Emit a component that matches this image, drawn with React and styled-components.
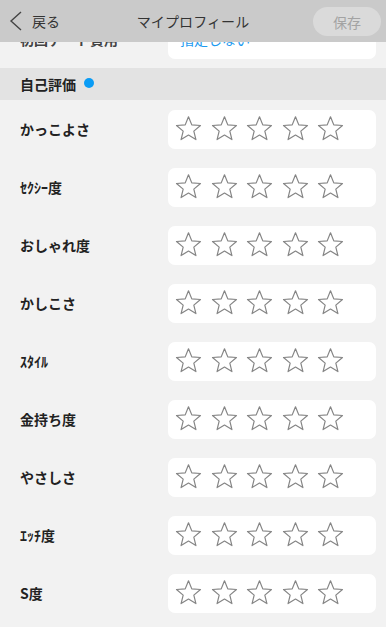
import React from 'react';
import styled, { createGlobalStyle } from 'styled-components';

const GlobalStyle = createGlobalStyle`
  html, body {
    margin: 0;
    padding: 0;
    background: #f2f2f2;
  }
  body {
    font-family: "Noto Sans CJK JP", "Noto Sans", sans-serif;
    color: #222;
  }
`;

const Page = styled.div`
  width: 386px;
  height: 627px;
  overflow: hidden;
  background: #f2f2f2;
  display: flex;
  flex-direction: column;
`;

const Header = styled.div`
  height: 42px;
  flex: 0 0 42px;
  background: #cacaca;
  display: grid;
  grid-template-columns: 1fr auto 1fr;
  align-items: center;
`;

const Back = styled.div`
  display: flex;
  align-items: center;
  gap: 9px;
  padding-left: 9px;
  font-size: 14px;
  color: #333;
`;

const Title = styled.div`
  font-size: 14px;
  color: #333;
  letter-spacing: 0.1px;
`;

const SaveWrap = styled.div`
  display: flex;
  justify-content: flex-end;
  padding-right: 5px;
`;

const SaveButton = styled.button`
  width: 68px;
  height: 29px;
  border: none;
  border-radius: 15px;
  background: #dadada;
  color: #a3a3a3;
  font-family: inherit;
  font-size: 14px;
  padding: 0;
  margin-top: 1px;
`;

const Clip = styled.div`
  height: 26px;
  flex: 0 0 26px;
  overflow: hidden;
  display: flex;
  flex-direction: column;
  justify-content: flex-end;
`;

const Row = styled.div`
  height: 58px;
  flex: 0 0 58px;
  display: flex;
  align-items: center;
  padding: 0 10px 0 20px;
`;

const Label = styled.div`
  width: 148px;
  flex: 0 0 148px;
  font-size: 14px;
  font-weight: 700;
  color: ${(p) => (p.muted ? '#444' : '#222')};
  white-space: nowrap;
`;

const Field = styled.div`
  flex: 1;
  height: 39px;
  background: #fff;
  border-radius: 7px;
  display: flex;
  align-items: center;
  padding: 0 7px;
  box-sizing: border-box;
`;

const Choice = styled.div`
  flex: 1;
  font-size: 14px;
  color: #1d9bf0;
  padding-left: 5px;
`;

const Chevron = styled.svg`
  margin-top: -12px;
  margin-right: 8px;
`;

const SectionHeader = styled.div`
  height: 32px;
  flex: 0 0 32px;
  background: #e3e3e3;
  display: flex;
  align-items: center;
  padding-left: 20px;
  gap: 8px;
  font-size: 14px;
  font-weight: 700;
  color: #222;
`;

const Dot = styled.span`
  width: 10px;
  height: 10px;
  border-radius: 50%;
  background: #0a9cf5;
  margin-top: -2px;
`;

const Stars = styled.div`
  display: flex;
  gap: 8.5px;
  margin-top: -2px;
`;

const starPoints = (() => {
  const cx = 13.5;
  const cy = 13.4;
  const R = 12.6;
  const r = 5.6;
  const pts = [];
  for (let i = 0; i < 10; i++) {
    const a = (-90 + i * 36) * (Math.PI / 180);
    const rad = i % 2 === 0 ? R : r;
    pts.push(`${(cx + rad * Math.cos(a)).toFixed(2)},${(cy + rad * Math.sin(a)).toFixed(2)}`);
  }
  return pts.join(' ');
})();

const Star = () => (
  <svg width="27" height="25" viewBox="0 0 27 25">
    <polygon
      points={starPoints}
      fill="none"
      stroke="#858585"
      strokeWidth="1.2"
      strokeLinejoin="round"
    />
  </svg>
);

const ratings = [
  'かっこよさ',
  'ｾｸｼｰ度',
  'おしゃれ度',
  'かしこさ',
  'ｽﾀｲﾙ',
  '金持ち度',
  'やさしさ',
  'ｴｯﾁ度',
  'S度',
];

const App = () => {
  return (
    <>
      <GlobalStyle />
      <Page>
        <Header>
          <Back>
            <svg width="14" height="20" viewBox="0 0 14 20">
              <path d="M12 1 L2 10 L12 19" fill="none" stroke="#444" strokeWidth="1.4" />
            </svg>
            <span>戻る</span>
          </Back>
          <Title>マイプロフィール</Title>
          <SaveWrap>
            <SaveButton>保存</SaveButton>
          </SaveWrap>
        </Header>

        <Clip>
          <Row>
            <Label muted>初回デート費用</Label>
            <Field>
              <Choice>指定しない</Choice>
              <Chevron width="8" height="12" viewBox="0 0 8 12">
                <path d="M1 1 L6 6 L1 11" fill="none" stroke="#999" strokeWidth="1.2" />
              </Chevron>
            </Field>
          </Row>
        </Clip>

        <SectionHeader>
          自己評価
          <Dot />
        </SectionHeader>

        {ratings.map((name) => (
          <Row key={name}>
            <Label>{name}</Label>
            <Field>
              <Stars>
                {[0, 1, 2, 3, 4].map((i) => (
                  <Star key={i} />
                ))}
              </Stars>
            </Field>
          </Row>
        ))}
      </Page>
    </>
  );
};

export default App;
